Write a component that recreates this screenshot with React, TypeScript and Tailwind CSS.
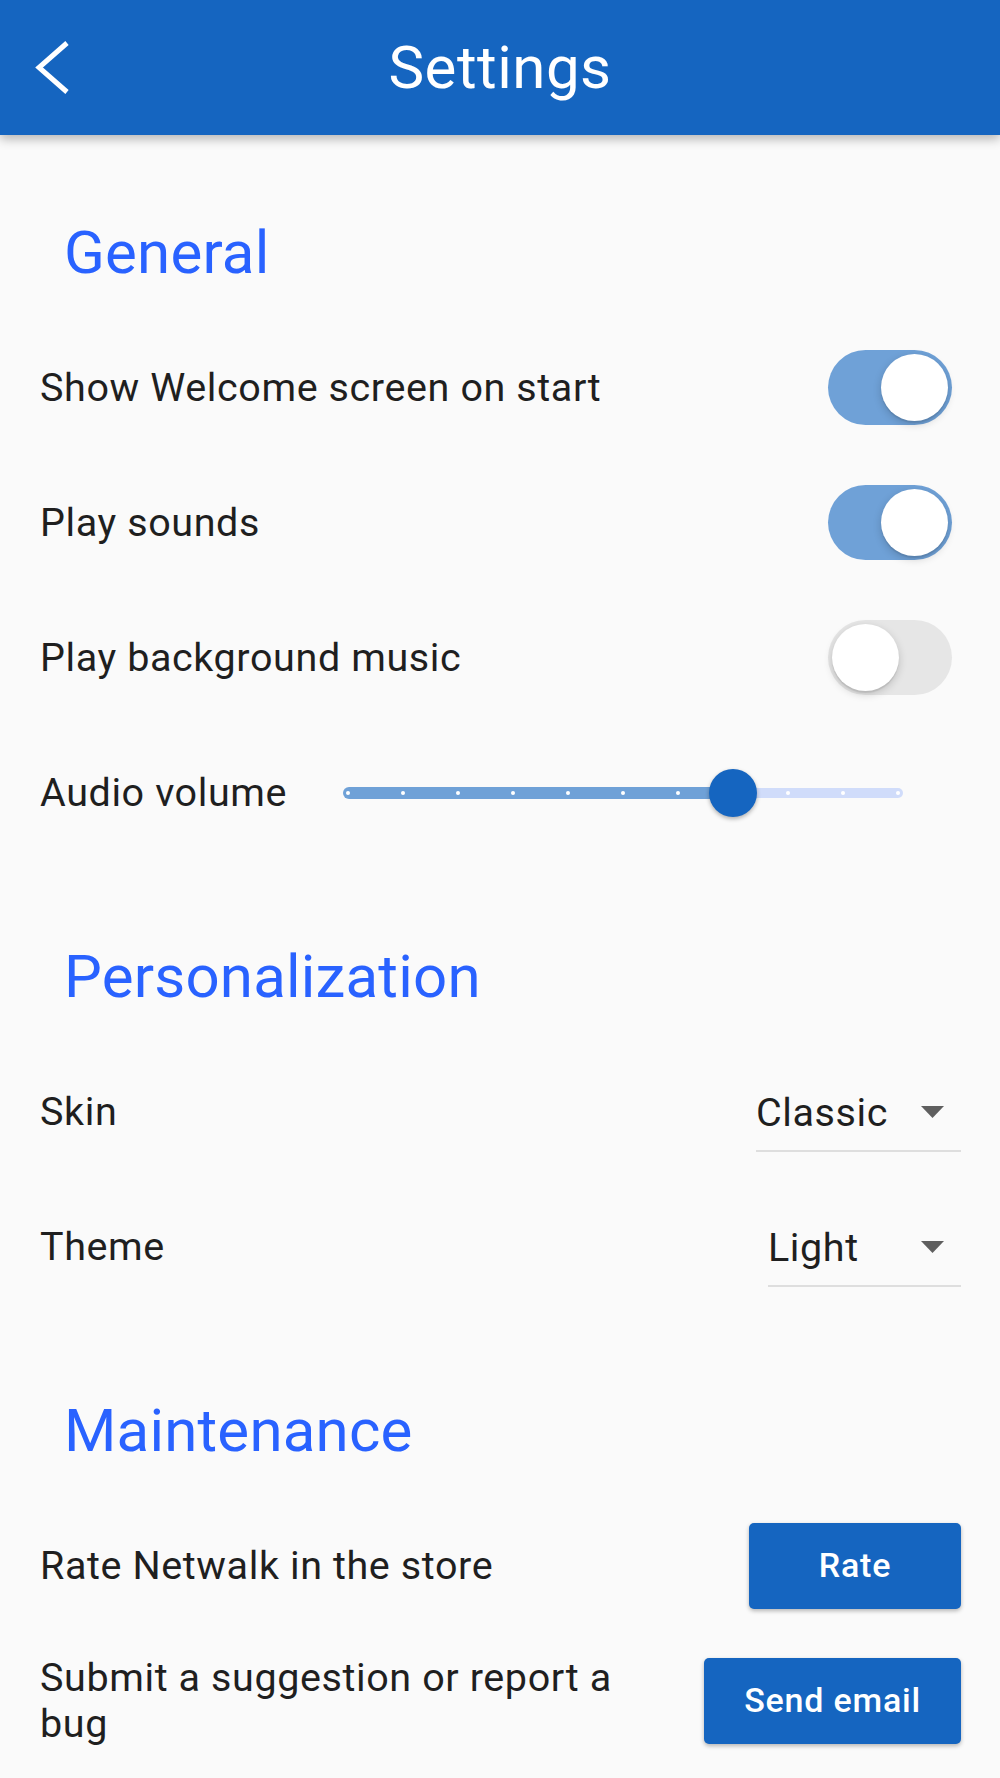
import React from "react";

function Switch({ on }: { on: boolean }) {
  return (
    <div
      className={`mr-[9px] w-[124px] h-[75px] rounded-full p-[4px] flex ${
        on ? "bg-[#6FA1D7] justify-end" : "bg-[#E6E6E6] justify-start"
      }`}
    >
      <div className="w-[67px] h-[67px] rounded-full bg-white shadow-[0_3px_8px_rgba(0,0,0,0.18),0_2px_1px_rgba(0,0,0,0.08)]" />
    </div>
  );
}

function Slider({ value }: { value: number }) {
  const ticks = Array.from({ length: 11 }, (_, i) => i);
  const thumbX = 5 + value * 55;
  return (
    <div className="relative mr-[58px] w-[560px] h-[48px]">
      <div
        className="absolute left-0 top-[18px] h-[12px] rounded-l-full bg-[#6FA1D7]"
        style={{ width: thumbX }}
      />
      <div
        className="absolute right-0 top-[19px] h-[10px] rounded-r-full bg-[#D0DCFA]"
        style={{ left: thumbX }}
      />
      {ticks.map((i) => (
        <div
          key={i}
          className="absolute top-[22px] w-[4px] h-[4px] rounded-full bg-white"
          style={{ left: 5 + i * 55 - 2 }}
        />
      ))}
      <div
        className="absolute top-0 w-[48px] h-[48px] rounded-full bg-[#1565C0] shadow-[0_2px_4px_rgba(0,0,0,0.3)]"
        style={{ left: thumbX - 24 }}
      />
    </div>
  );
}

function Dropdown({ value, textWidth }: { value: string; textWidth: string }) {
  return (
    <div className="mt-[17px] flex flex-col">
      <div className="flex items-center">
        <span className={`${textWidth} text-[39.5px] leading-[47px] text-[#1F1F1F] tracking-[0.6px]`}>{value}</span>
        <span className="w-[58px] flex justify-center">
          <svg width="23" height="12" viewBox="0 0 23 12">
            <polygon points="0,0 23,0 11.5,12" fill="#5F5F5F" />
          </svg>
        </span>
      </div>
      <div className="mt-[14px] h-[2px] bg-[#DEDEDE]" />
    </div>
  );
}

function Button({ children }: { children: React.ReactNode }) {
  return (
    <button className="min-w-[212px] h-[86px] px-[40px] rounded-[5px] bg-[#1565C0] text-white text-[34px] font-medium tracking-[0.8px] shadow-[0_2px_4px_rgba(0,0,0,0.28)]">
      {children}
    </button>
  );
}

function Heading({ children }: { children: React.ReactNode }) {
  return (
    <div className="h-[135px] flex items-center pl-[24px]">
      <h2 className="text-[60px] leading-none text-[#2962FF] tracking-[0.2px]">{children}</h2>
    </div>
  );
}

function Row({ label, children }: { label: React.ReactNode; children: React.ReactNode }) {
  return (
    <div className="h-[135px] flex items-center justify-between">
      <div className="max-w-[600px] text-[39.5px] leading-[46px] text-[#1F1F1F] tracking-[0.6px]">{label}</div>
      {children}
    </div>
  );
}

export default function App() {
  return (
    <div className="min-h-[1778px] bg-[#FAFAFA] font-['Roboto',sans-serif]">
      <header className="relative z-10 h-[135px] bg-[#1565C0] shadow-[0_4px_10px_rgba(0,0,0,0.28)] grid grid-cols-[120px_1fr_120px] items-center">
        <div className="pl-[30px] flex items-center">
          <svg width="44" height="62" viewBox="0 0 44 62">
            <polyline
              points="37,6 9,30.5 37,55"
              fill="none"
              stroke="white"
              strokeWidth="5"
            />
          </svg>
        </div>
        <h1 className="text-center text-white text-[60px] leading-none tracking-[0.5px]">Settings</h1>
        <div />
      </header>

      <main className="pl-[40px] pr-[39px]">
        <section className="mt-[50px]">
          <Heading>General</Heading>
          <Row label="Show Welcome screen on start">
            <Switch on />
          </Row>
          <Row label="Play sounds">
            <Switch on />
          </Row>
          <Row label="Play background music">
            <Switch on={false} />
          </Row>
          <Row label="Audio volume">
            <Slider value={7} />
          </Row>
        </section>

        <section className="mt-[49px]">
          <Heading>Personalization</Heading>
          <Row label="Skin">
            <Dropdown value="Classic" textWidth="w-[147px]" />
          </Row>
          <Row label="Theme">
            <Dropdown value="Light" textWidth="w-[135px]" />
          </Row>
        </section>

        <section className="mt-[49px]">
          <Heading>Maintenance</Heading>
          <Row label="Rate Netwalk in the store">
            <Button>Rate</Button>
          </Row>
          <Row label="Submit a suggestion or report a bug">
            <Button>Send email</Button>
          </Row>
        </section>
      </main>
    </div>
  );
}
